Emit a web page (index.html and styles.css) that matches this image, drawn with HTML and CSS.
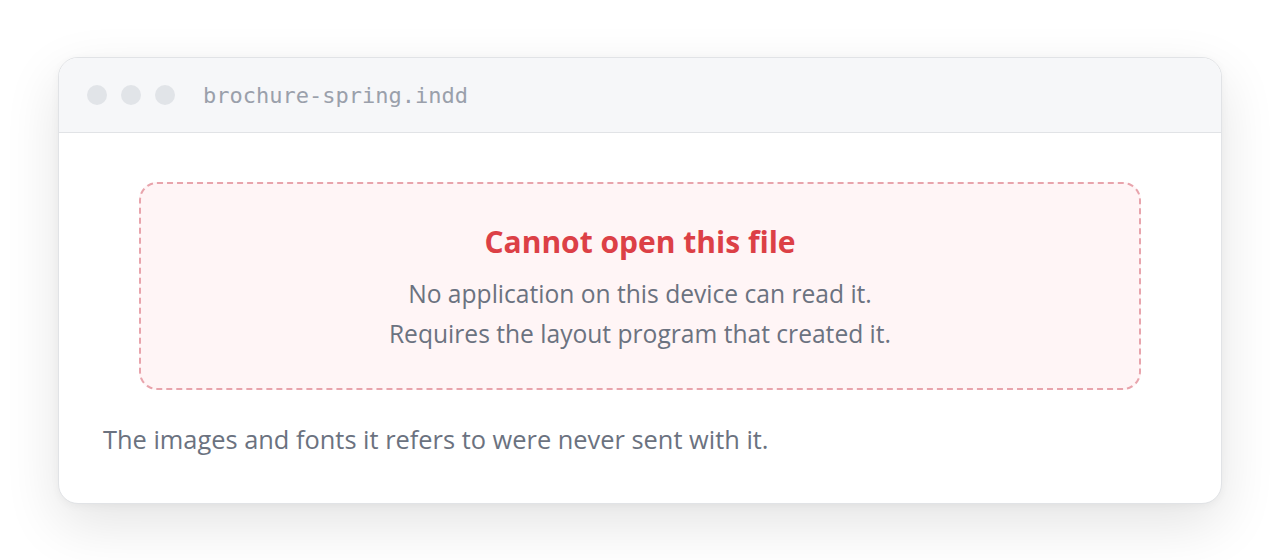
FILE: index.html
```html
<!DOCTYPE html>
<html lang="en">
<head>
<meta charset="utf-8">
<title>brochure-spring.indd</title>
<link rel="stylesheet" href="styles.css">
</head>
<body>
<div class="stage">
  <div class="window">
    <div class="titlebar">
      <div class="dots">
        <span class="dot"></span>
        <span class="dot"></span>
        <span class="dot"></span>
      </div>
      <span class="filename">brochure-spring.indd</span>
    </div>
    <div class="content">
      <div class="error">
        <h1 class="error-title">Cannot open this file</h1>
        <p class="error-line">No application on this device can read it.</p>
        <p class="error-line">Requires the layout program that created it.</p>
      </div>
      <p class="note">The images and fonts it refers to were never sent with it.</p>
    </div>
  </div>
</div>
</body>
</html>
```

FILE: styles.css
```css
html, body {
  margin: 0;
  padding: 0;
}
body {
  background: #ffffff;
  font-family: "Open Sans", "Noto Sans", sans-serif;
  width: 1280px;
  height: 560px;
  overflow: hidden;
}
.stage {
  padding: 57px 58px 0 58px;
}
.window {
  background: #ffffff;
  border: 1px solid #e1e3e6;
  border-radius: 20px;
  overflow: hidden;
  box-shadow: 0 20px 56px rgba(0, 0, 0, 0.11), 0 2px 8px rgba(0, 0, 0, 0.04);
}
.titlebar {
  display: flex;
  align-items: center;
  height: 74px;
  padding: 0 28px;
  background: #f6f7f9;
  border-bottom: 1px solid #e1e3e6;
}
.dots {
  display: flex;
  gap: 14px;
}
.dot {
  width: 20px;
  height: 20px;
  border-radius: 50%;
  background: #e1e4e8;
}
.filename {
  margin-left: 28px;
  font-family: "DejaVu Sans Mono", "Liberation Mono", monospace;
  font-size: 22px;
  color: #9aa0ab;
}
.content {
  padding: 49px 44px 46px 44px;
}
.error {
  margin: 0 36px;
  border: 2px dashed #e8a4ac;
  border-radius: 18px;
  background: #fff5f6;
  padding: 38px 20px 34px;
  text-align: center;
}
.error-title {
  margin: 0 0 12px;
  font-size: 30px;
  font-weight: 700;
  line-height: 40px;
  color: #dc4046;
}
.error-line {
  margin: 0;
  font-size: 24.6px;
  line-height: 40px;
  color: #6b7280;
}
.note {
  margin: 31px 0 0;
  font-size: 25.4px;
  line-height: 36px;
  color: #6b7280;
}
```
